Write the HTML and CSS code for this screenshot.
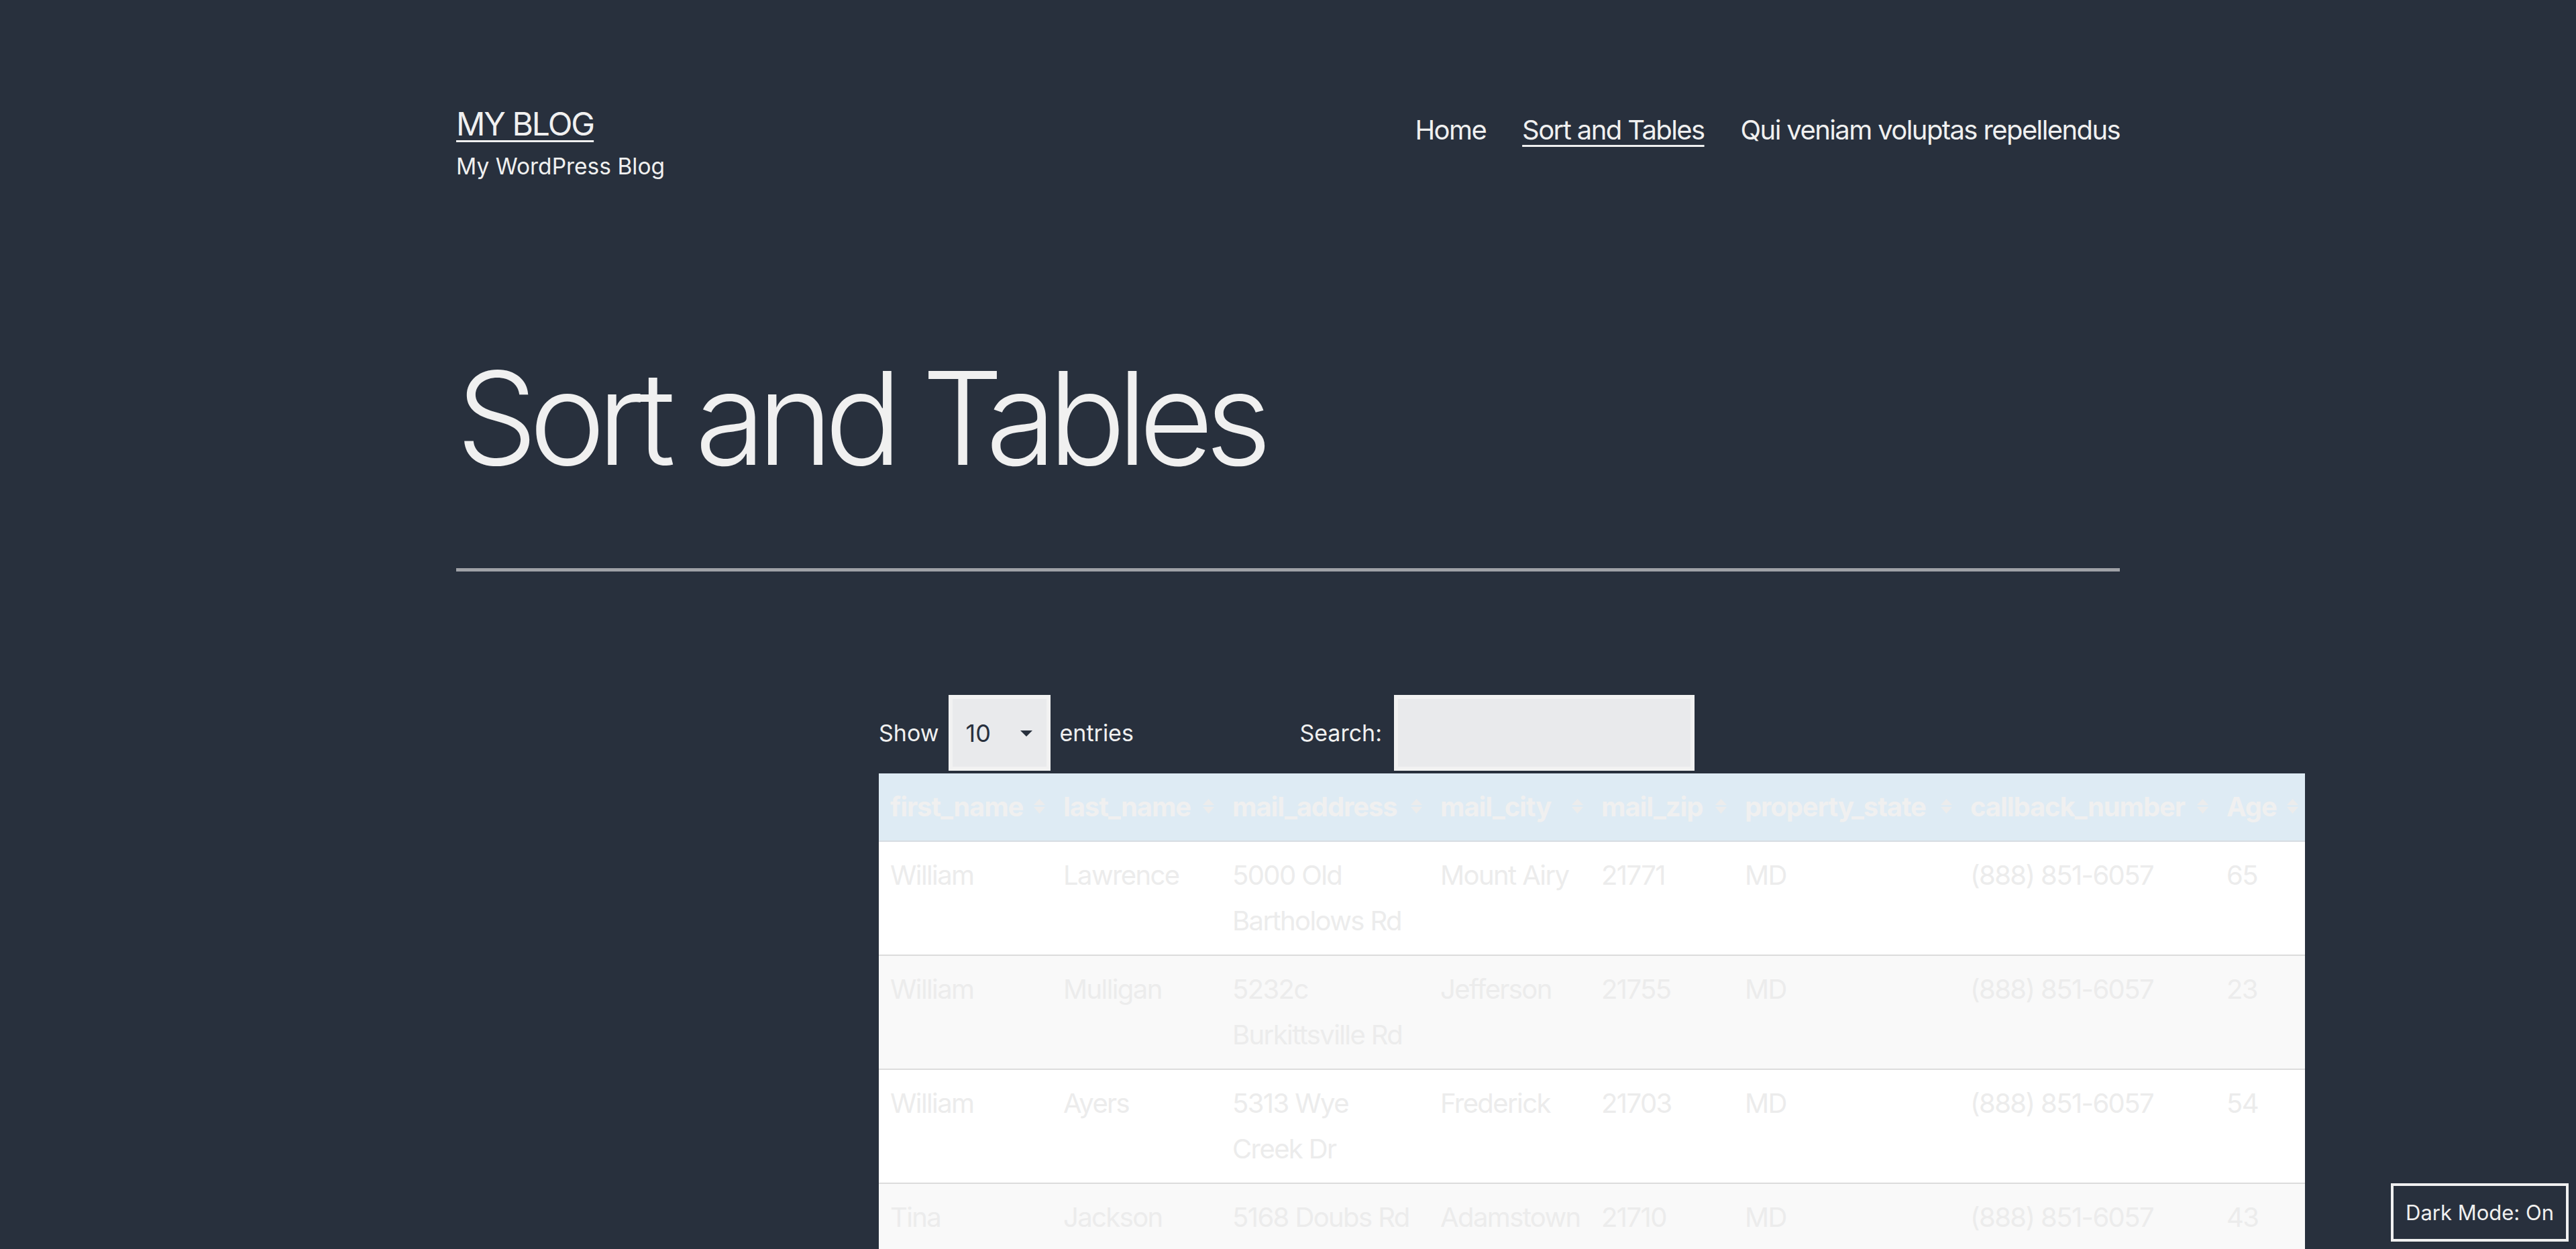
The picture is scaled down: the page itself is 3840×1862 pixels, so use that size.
FILE: index.html
```html
<!DOCTYPE html>
<html lang="en">
<head>
<meta charset="utf-8">
<title>Sort and Tables – MY BLOG</title>
<link rel="stylesheet" href="styles.css">
</head>
<body>
<header class="site-header">
  <div class="branding">
    <p class="site-title"><a href="#">MY BLOG</a></p>
    <p class="site-description">My WordPress Blog</p>
  </div>
  <nav class="primary-nav">
    <ul class="menu">
      <li><a href="#">Home</a></li>
      <li><a href="#" class="current">Sort and Tables</a></li>
      <li><a href="#">Qui veniam voluptas repellendus</a></li>
    </ul>
  </nav>
</header>

<main class="site-main">
  <header class="entry-header">
    <h1 class="entry-title">Sort and Tables</h1>
  </header>

  <div class="entry-content">
    <div class="dt-wrapper">
      <div class="dt-controls">
        <label class="dt-length">Show
          <span class="select"><span class="select-value">10</span><svg class="select-arrow" viewBox="0 0 18 9" width="18" height="9"><polygon points="0,0 18,0 9,9"/></svg></span>
          entries</label>
        <label class="dt-filter">Search: <span class="search-input"></span></label>
      </div>

      <table class="dt-table">
        <colgroup>
          <col class="c1"><col class="c2"><col class="c3"><col class="c4"><col class="c5"><col class="c6"><col class="c7"><col class="c8">
        </colgroup>
        <thead>
          <tr>
            <th>first_name<svg class="sort" viewBox="0 0 17 22"><polygon points="0,9 8.5,0 17,9"/><polygon points="0,12 17,12 8.5,22"/></svg></th>
            <th>last_name<svg class="sort" viewBox="0 0 17 22"><polygon points="0,9 8.5,0 17,9"/><polygon points="0,12 17,12 8.5,22"/></svg></th>
            <th>mail_address<svg class="sort" viewBox="0 0 17 22"><polygon points="0,9 8.5,0 17,9"/><polygon points="0,12 17,12 8.5,22"/></svg></th>
            <th>mail_city<svg class="sort" viewBox="0 0 17 22"><polygon points="0,9 8.5,0 17,9"/><polygon points="0,12 17,12 8.5,22"/></svg></th>
            <th>mail_zip<svg class="sort" viewBox="0 0 17 22"><polygon points="0,9 8.5,0 17,9"/><polygon points="0,12 17,12 8.5,22"/></svg></th>
            <th>property_state<svg class="sort" viewBox="0 0 17 22"><polygon points="0,9 8.5,0 17,9"/><polygon points="0,12 17,12 8.5,22"/></svg></th>
            <th>callback_number<svg class="sort" viewBox="0 0 17 22"><polygon points="0,9 8.5,0 17,9"/><polygon points="0,12 17,12 8.5,22"/></svg></th>
            <th>Age<svg class="sort" viewBox="0 0 17 22"><polygon points="0,9 8.5,0 17,9"/><polygon points="0,12 17,12 8.5,22"/></svg></th>
          </tr>
        </thead>
        <tbody>
          <tr class="odd"><td>William</td><td>Lawrence</td><td>5000 Old Bartholows Rd</td><td>Mount Airy</td><td>21771</td><td>MD</td><td>(888) 851-6057</td><td>65</td></tr>
          <tr class="even"><td>William</td><td>Mulligan</td><td>5232c Burkittsville Rd</td><td>Jefferson</td><td>21755</td><td>MD</td><td>(888) 851-6057</td><td>23</td></tr>
          <tr class="odd"><td>William</td><td>Ayers</td><td>5313 Wye Creek Dr</td><td>Frederick</td><td>21703</td><td>MD</td><td>(888) 851-6057</td><td>54</td></tr>
          <tr class="even"><td>Tina</td><td>Jackson</td><td>5168 Doubs Rd</td><td>Adamstown</td><td>21710</td><td>MD</td><td>(888) 851-6057</td><td>43</td></tr>
          <tr class="odd"><td>Tina</td><td>Miller</td><td>5400 Ballenger Creek Pike</td><td>Frederick</td><td>21703</td><td>MD</td><td>(888) 851-6057</td><td>38</td></tr>
        </tbody>
      </table>
    </div>
  </div>
</main>

<button class="dark-toggle" type="button">Dark Mode: On</button>
</body>
</html>
```

FILE: styles.css
```css
html, body {
  margin: 0;
  padding: 0;
}

body {
  background: #28303d;
  color: #f0f0f0;
  font-family: Inter, "Noto Sans", "Liberation Sans", sans-serif;
}

a {
  color: #f0f0f0;
}

/* ---------- site header ---------- */
.site-header {
  width: 2480px;
  margin: 0 auto;
  padding-top: 156px;
  display: flex;
  justify-content: space-between;
  align-items: flex-start;
}

.site-title {
  margin: 0;
  font-size: 48px;
  line-height: 1.2;
  letter-spacing: -2px;
  text-transform: uppercase;
}

.site-title a {
  text-decoration: underline;
  text-decoration-thickness: 3px;
  text-underline-offset: 7px;
}

.site-description {
  margin: 11px 0 0;
  font-size: 33.5px;
  line-height: 1.4;
}

.primary-nav {
  margin-top: 14px;
}

.menu {
  list-style: none;
  margin: 0;
  padding: 0;
  display: flex;
  gap: 54px;
}

.menu a {
  font-size: 40px;
  line-height: 1.2;
  letter-spacing: -1.6px;
  text-decoration: none;
  display: block;
}

.menu a.current {
  text-decoration: underline;
  text-decoration-thickness: 3px;
  text-underline-offset: 8px;
}

/* ---------- entry header ---------- */
.entry-header {
  width: 2480px;
  margin: 256px auto 0;
  padding-bottom: 128px;
  border-bottom: 5px solid #9fa1a7;
}

.entry-title {
  margin: 0;
  font-size: 192px;
  font-weight: 300;
  line-height: 1;
  letter-spacing: -12.5px;
}

/* ---------- data table ---------- */
.entry-content {
  width: 1220px;
  margin: 184px auto 0;
}

.dt-controls {
  display: flex;
  justify-content: space-between;
  align-items: center;
  font-size: 34px;
  padding-right: 4px;
}

.dt-length,
.dt-filter {
  display: flex;
  align-items: center;
}

.dt-length {
  gap: 14px;
}

.dt-filter {
  gap: 18px;
}

.select {
  box-sizing: border-box;
  width: 152px;
  height: 113px;
  background: #e9eaec;
  border: 6px solid #f2f2f2;
  color: #28303d;
  display: flex;
  align-items: center;
  justify-content: space-between;
  padding: 0 21px 0 20px;
  font-size: 36px;
}

.select-arrow {
  fill: #28303d;
  margin-top: 2px;
}

.search-input {
  box-sizing: border-box;
  width: 448px;
  height: 113px;
  background: #e9eaec;
  border: 6px solid #f2f2f2;
}

.dt-table {
  margin-top: 4px;
  width: 2126px;
  table-layout: fixed;
  border-collapse: collapse;
  font-size: 40px;
  line-height: 68px;
}

.c1 { width: 258px; }
.c2 { width: 252px; }
.c3 { width: 310px; }
.c4 { width: 240px; }
.c5 { width: 214px; }
.c6 { width: 336px; }
.c7 { width: 382px; }
.c8 { width: 134px; }

.dt-table th {
  position: relative;
  background: #deebf4;
  color: #f0f0f0;
  font-weight: 700;
  letter-spacing: -1.1px;
  text-align: left;
  white-space: nowrap;
  padding: 16px 38px 16px 17px;
  border-bottom: 2px solid #d6dce2;
}

.sort {
  position: absolute;
  right: 10px;
  top: 38px;
  width: 17px;
  height: 22px;
  fill: #ececec;
}

.dt-table td {
  padding: 16px 17px;
  vertical-align: top;
  color: #ececec;
  letter-spacing: -1.6px;
  border-bottom: 2px solid #dcdcdc;
}

.dt-table tr.odd td {
  background: #ffffff;
}

.dt-table tr.even td {
  background: #f9f9f9;
}

/* ---------- dark mode toggle ---------- */
.dark-toggle {
  position: fixed;
  right: 11px;
  bottom: 11px;
  box-sizing: border-box;
  height: 87px;
  padding: 0 18px;
  background: #28303d;
  color: #f0f0f0;
  border: 4px solid #f0f0f0;
  font-family: Inter, "Noto Sans", sans-serif;
  font-size: 31px;
}
```
